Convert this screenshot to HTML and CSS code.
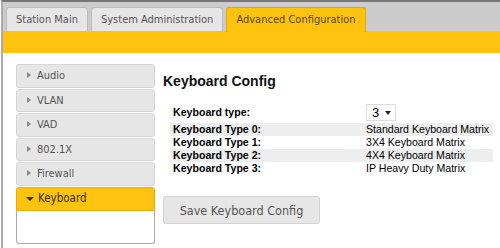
FILE: index.html
```html
<!DOCTYPE html>
<html lang="en">
<head>
  <meta charset="UTF-8">
  <title>Advanced Configuration</title>
  <link rel="stylesheet" href="styles.css">
</head>
<body>
  <div class="page">
    <ul class="tabs">
      <li class="tab">Station Main</li>
      <li class="tab">System Administration</li>
      <li class="tab active">Advanced Configuration</li>
    </ul>
    <div class="band"></div>
    <div class="main">
      <div class="menu">
        <div class="item"><span class="arrow"></span>Audio</div>
        <div class="item"><span class="arrow"></span>VLAN</div>
        <div class="item"><span class="arrow"></span>VAD</div>
        <div class="item"><span class="arrow"></span>802.1X</div>
        <div class="item"><span class="arrow"></span>Firewall</div>
        <div class="item open"><span class="arrow down"></span>Keyboard</div>
        <div class="panel"></div>
      </div>
      <div class="content">
        <h1>Keyboard Config</h1>
        <table class="config">
          <tr class="head">
            <th>Keyboard type:</th>
            <td><span class="select">3 <span class="caret"></span></span></td>
          </tr>
          <tr class="odd"><th>Keyboard Type 0:</th><td>Standard Keyboard Matrix</td></tr>
          <tr><th>Keyboard Type 1:</th><td>3X4 Keyboard Matrix</td></tr>
          <tr class="odd"><th>Keyboard Type 2:</th><td>4X4 Keyboard Matrix</td></tr>
          <tr><th>Keyboard Type 3:</th><td>IP Heavy Duty Matrix</td></tr>
        </table>
        <button type="button">Save Keyboard Config</button>
      </div>
    </div>
  </div>
</body>
</html>
```

FILE: styles.css
```css
body {
  margin: 0;
  font-family: 'DejaVu Sans', Verdana, sans-serif;
  font-stretch: condensed;
  font-size: 11px;
  color: #555;
  background: #fff;
}
.page {
  border-top: 2px solid #777;
  border-left: 2px solid #aaa;
  margin-left: 1px;
  height: 246px;
}
.tabs {
  list-style: none;
  margin: 0;
  padding: 5px 0 0 3px;
  background: #ccc;
  display: flex;
  gap: 3px;
  height: 24px;
}
.tab {
  height: 23px;
  line-height: 23px;
  padding: 0 9px;
  background: #e6e6e6;
  border: 1px solid #bbb;
  border-bottom: none;
  border-radius: 3px 3px 0 0;
  color: #555;
  font-size: 11px;
}
.tab.active {
  background: #ffc20e;
  border-color: #e0a800;
  color: #5a4500;
  height: 24px;
}
.band {
  height: 22px;
  background: #ffc20e;
}
.main {
  display: flex;
  padding: 11px 0 0 13px;
}
.menu {
  width: 139px;
  display: flex;
  flex-direction: column;
  gap: 1px;
}
.item {
  height: 21.6px;
  line-height: 21.6px;
  background: #e6e6e6;
  border: 1px solid #d6d6d6;
  border-radius: 3px;
  padding-left: 10px;
  font-size: 11px;
  color: #555;
}
.arrow {
  display: inline-block;
  width: 0;
  height: 0;
  border-top: 3px solid transparent;
  border-bottom: 3px solid transparent;
  border-left: 4px solid #888;
  margin-right: 6px;
  vertical-align: 1px;
}
.arrow.down {
  border-left: 4px solid transparent;
  border-right: 4px solid transparent;
  border-top: 4px solid #333;
  border-bottom: none;
  margin-right: 4px;
}
.item.open {
  background: #ffc20e;
  border-color: #e5b000;
  border-radius: 3px 3px 0 0;
  color: #3b2e00;
  font-size: 11.5px;
  padding-left: 9px;
}
.panel {
  margin-top: -1px;
  height: 32px;
  border: 1px solid #aaa;
  border-top: none;
  border-radius: 0 0 3px 3px;
}
.content {
  flex: 1;
  padding-left: 8px;
  font-family: 'Liberation Sans', Arial, sans-serif;
  font-stretch: normal;
  color: #000;
}
h1 {
  margin: 9px 0 15px;
  font-size: 14px;
  line-height: 16px;
  font-weight: bold;
  color: #111;
}
.config {
  border-collapse: collapse;
  margin-left: 7px;
  width: 323px;
  font-size: 10.6px;
}
.config th {
  text-align: left;
  font-weight: bold;
  width: 193px;
  padding: 0 0 0 3px;
  height: 13px;
  line-height: 13px;
  white-space: nowrap;
}
.config td {
  padding: 0;
  height: 13px;
  line-height: 13px;
  white-space: nowrap;
}
.config tr.head th,
.config tr.head td {
  height: 19px;
  line-height: 17px;
  vertical-align: top;
}
.config tr.odd {
  background: #eee;
}
.select {
  display: inline-block;
  width: 23px;
  height: 15px;
  line-height: 15px;
  border: 1px solid #ddd;
  padding-left: 5px;
  font-size: 13px;
  position: relative;
}
.caret {
  position: absolute;
  right: 4px;
  top: 6px;
  border-left: 3px solid transparent;
  border-right: 3px solid transparent;
  border-top: 4px solid #222;
}
button {
  margin-top: 21px;
  width: 157px;
  height: 28px;
  background: #e6e6e6;
  border: 1px solid #d3d3d3;
  border-radius: 3px;
  font-family: 'DejaVu Sans', Verdana, sans-serif;
  font-stretch: condensed;
  font-size: 12.5px;
  color: #555;
  padding: 0;
}
```
